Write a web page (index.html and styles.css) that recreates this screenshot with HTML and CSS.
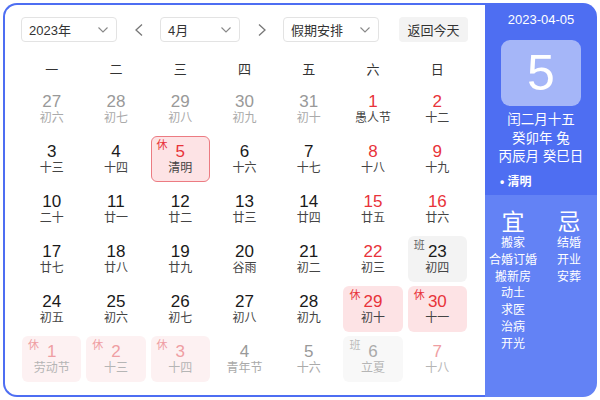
FILE: index.html
```html
<!DOCTYPE html>
<html lang="zh">
<head>
<meta charset="utf-8">
<link rel="stylesheet" href="styles.css">
</head>
<body>
<div class="cal">
  <div class="main">
    <div class="toolbar">
      <div class="select sel-year"><span>2023年</span><svg class="chev" viewBox="0 0 10 6"><polyline points="0.5,0.5 5,5 9.5,0.5"/></svg></div>
      <div class="arrow"><svg viewBox="0 0 8 12"><polyline points="7,0.5 1,6 7,11.5"/></svg></div>
      <div class="select sel-month"><span>4月</span><svg class="chev" viewBox="0 0 10 6"><polyline points="0.5,0.5 5,5 9.5,0.5"/></svg></div>
      <div class="arrow"><svg viewBox="0 0 8 12"><polyline points="1,0.5 7,6 1,11.5"/></svg></div>
      <div class="select sel-holiday"><span>假期安排</span><svg class="chev" viewBox="0 0 10 6"><polyline points="0.5,0.5 5,5 9.5,0.5"/></svg></div>
      <div class="today">返回今天</div>
    </div>
    <div class="week">
      <div>一</div><div>二</div><div>三</div><div>四</div><div>五</div><div>六</div><div>日</div>
    </div>
    <div class="grid">
      <div class="cell other"><b>27</b><i>初六</i></div>
      <div class="cell other"><b>28</b><i>初七</i></div>
      <div class="cell other"><b>29</b><i>初八</i></div>
      <div class="cell other"><b>30</b><i>初九</i></div>
      <div class="cell other"><b>31</b><i>初十</i></div>
      <div class="cell red"><b>1</b><i>愚人节</i></div>
      <div class="cell red"><b>2</b><i>十二</i></div>

      <div class="cell"><b>3</b><i>十三</i></div>
      <div class="cell"><b>4</b><i>十四</i></div>
      <div class="cell rest today-cell"><em>休</em><b>5</b><i>清明</i></div>
      <div class="cell"><b>6</b><i>十六</i></div>
      <div class="cell"><b>7</b><i>十七</i></div>
      <div class="cell red"><b>8</b><i>十八</i></div>
      <div class="cell red"><b>9</b><i>十九</i></div>

      <div class="cell"><b>10</b><i>二十</i></div>
      <div class="cell"><b>11</b><i>廿一</i></div>
      <div class="cell"><b>12</b><i>廿二</i></div>
      <div class="cell"><b>13</b><i>廿三</i></div>
      <div class="cell"><b>14</b><i>廿四</i></div>
      <div class="cell red"><b>15</b><i>廿五</i></div>
      <div class="cell red"><b>16</b><i>廿六</i></div>

      <div class="cell"><b>17</b><i>廿七</i></div>
      <div class="cell"><b>18</b><i>廿八</i></div>
      <div class="cell"><b>19</b><i>廿九</i></div>
      <div class="cell"><b>20</b><i>谷雨</i></div>
      <div class="cell"><b>21</b><i>初二</i></div>
      <div class="cell red"><b>22</b><i>初三</i></div>
      <div class="cell work"><em>班</em><b>23</b><i>初四</i></div>

      <div class="cell"><b>24</b><i>初五</i></div>
      <div class="cell"><b>25</b><i>初六</i></div>
      <div class="cell"><b>26</b><i>初七</i></div>
      <div class="cell"><b>27</b><i>初八</i></div>
      <div class="cell"><b>28</b><i>初九</i></div>
      <div class="cell rest"><em>休</em><b>29</b><i>初十</i></div>
      <div class="cell rest"><em>休</em><b>30</b><i>十一</i></div>

      <div class="cell rest next"><em>休</em><b>1</b><i>劳动节</i></div>
      <div class="cell rest next"><em>休</em><b>2</b><i>十三</i></div>
      <div class="cell rest next"><em>休</em><b>3</b><i>十四</i></div>
      <div class="cell other"><b>4</b><i>青年节</i></div>
      <div class="cell other"><b>5</b><i>十六</i></div>
      <div class="cell work next"><em>班</em><b>6</b><i>立夏</i></div>
      <div class="cell other pink"><b>7</b><i>十八</i></div>
    </div>
  </div>
  <div class="side">
    <div class="side-top">
      <div class="date">2023-04-05</div>
      <div class="big">5</div>
      <div class="lunar">闰二月十五</div>
      <div class="lunar">癸卯年 兔</div>
      <div class="lunar">丙辰月 癸巳日</div>
      <div class="term">• 清明</div>
    </div>
    <div class="side-bot">
      <div class="col">
        <div class="head">宜</div>
        <div>搬家</div><div>合婚订婚</div><div>搬新房</div><div>动土</div><div>求医</div><div>治病</div><div>开光</div>
      </div>
      <div class="col">
        <div class="head">忌</div>
        <div>结婚</div><div>开业</div><div>安葬</div>
      </div>
    </div>
  </div>
</div>
</body>
</html>
```

FILE: styles.css
```css
* { box-sizing: border-box; }
html, body { margin: 0; padding: 0; background: #fff; }
body {
  font-family: "Liberation Sans", "Noto Sans CJK SC", sans-serif;
  color: #333;
}
.cal {
  margin: 3px;
  width: 594px;
  height: 394px;
  display: flex;
}
.main {
  width: 482px;
  height: 394px;
  border: 2px solid #4e6ef2;
  border-right: none;
  border-radius: 14px 0 0 14px;
  padding: 12px 0 0 16px;
  background: #fff;
}
.toolbar {
  display: flex;
  align-items: center;
  height: 25px;
}
.select {
  height: 25px;
  border: 1px solid #e3e3e3;
  border-radius: 4px;
  display: flex;
  align-items: center;
  justify-content: space-between;
  padding: 0 8px 0 7px;
  font-size: 13px;
  color: #333;
}
.sel-year { width: 96px; }
.sel-month { width: 80px; }
.sel-holiday { width: 96px; }
.chev { width: 10px; height: 6px; }
.chev polyline { fill: none; stroke: #888; stroke-width: 1.1; }
.arrow {
  width: 43px;
  height: 25px;
  display: flex;
  align-items: center;
  justify-content: center;
}
.arrow svg { width: 8px; height: 12px; }
.arrow polyline { fill: none; stroke: #777; stroke-width: 1.3; }
.today {
  margin-left: 20px;
  width: 69px;
  height: 25px;
  border-radius: 4px;
  background: #f3f3f3;
  font-size: 13px;
  color: #333;
  display: flex;
  align-items: center;
  justify-content: center;
}
.week, .grid {
  width: 445px;
  margin-left: 1px;
  display: grid;
  grid-template-columns: repeat(7, 1fr);
  column-gap: 5px;
}
.week {
  margin-top: 13px;
  height: 27px;
  align-items: center;
  text-align: center;
  font-size: 13px;
  color: #333;
}
.grid {
  margin-top: 4px;
  grid-auto-rows: 46px;
  row-gap: 4px;
}
.cell {
  position: relative;
  border-radius: 6px;
  display: flex;
  flex-direction: column;
  align-items: center;
  padding-top: 7px;
}
.cell b {
  font-weight: normal;
  font-size: 17px;
  line-height: 18px;
  color: #1a1a1a;
}
.cell i {
  font-style: normal;
  font-size: 12px;
  line-height: 14px;
  color: #444;
}
.cell em {
  position: absolute;
  left: 6px;
  top: 3px;
  font-style: normal;
  font-size: 11px;
  line-height: 13px;
  color: #e8333a;
}
.cell.other b { color: #999; }
.cell.other i { color: #aaa; }
.cell.red b { color: #e8333a; }
.cell.rest { background: #fde3e5; }
.cell.rest b { color: #e8333a; }
.cell.today-cell { border: 1px solid #ec7b82; padding-top: 6px; }
.cell.today-cell em { left: 5px; top: 2px; }
.cell.work { background: #f3f3f3; }
.cell.work em { color: #666; }
.cell.rest.next { background: #fdf1f2; }
.cell.rest.next b, .cell.rest.next em { color: #ef9ea3; }
.cell.rest.next i { color: #b5b5b5; }
.cell.work.next { background: #f8f8f8; }
.cell.work.next em { color: #bbb; }
.cell.work.next b { color: #aaa; }
.cell.work.next i { color: #b5b5b5; }
.cell.pink b { color: #ef9ea3; }
.cell.pink i { color: #b5b5b5; }

.side {
  width: 112px;
  height: 394px;
  border-radius: 0 14px 14px 0;
  overflow: hidden;
  display: flex;
  flex-direction: column;
  color: #fff;
}
.side-top {
  height: 192px;
  background: #4e6ef2;
  display: flex;
  flex-direction: column;
  align-items: center;
  padding-top: 9px;
}
.date {
  font-size: 13px;
  line-height: 16px;
}
.big {
  margin-top: 12px;
  width: 80px;
  height: 66px;
  border-radius: 9px;
  background: #a5b6f8;
  font-size: 50px;
  line-height: 66px;
  text-align: center;
  color: #fff;
}
.lunar {
  font-size: 13.5px;
  line-height: 18.5px;
}
.lunar:first-of-type { margin-top: 5px; }
.big + .lunar { margin-top: 5px; }
.term {
  align-self: flex-start;
  margin: 7px 0 0 15px;
  font-size: 12px;
  font-weight: bold;
  line-height: 16px;
}
.side-bot {
  flex: 1;
  background: #6382f5;
  display: grid;
  grid-template-columns: 56px 56px;
  padding-top: 14px;
  text-align: center;
  font-size: 12px;
  line-height: 16.8px;
  align-items: start;
}
.col .head {
  font-size: 23px;
  line-height: 26px;
}
```
